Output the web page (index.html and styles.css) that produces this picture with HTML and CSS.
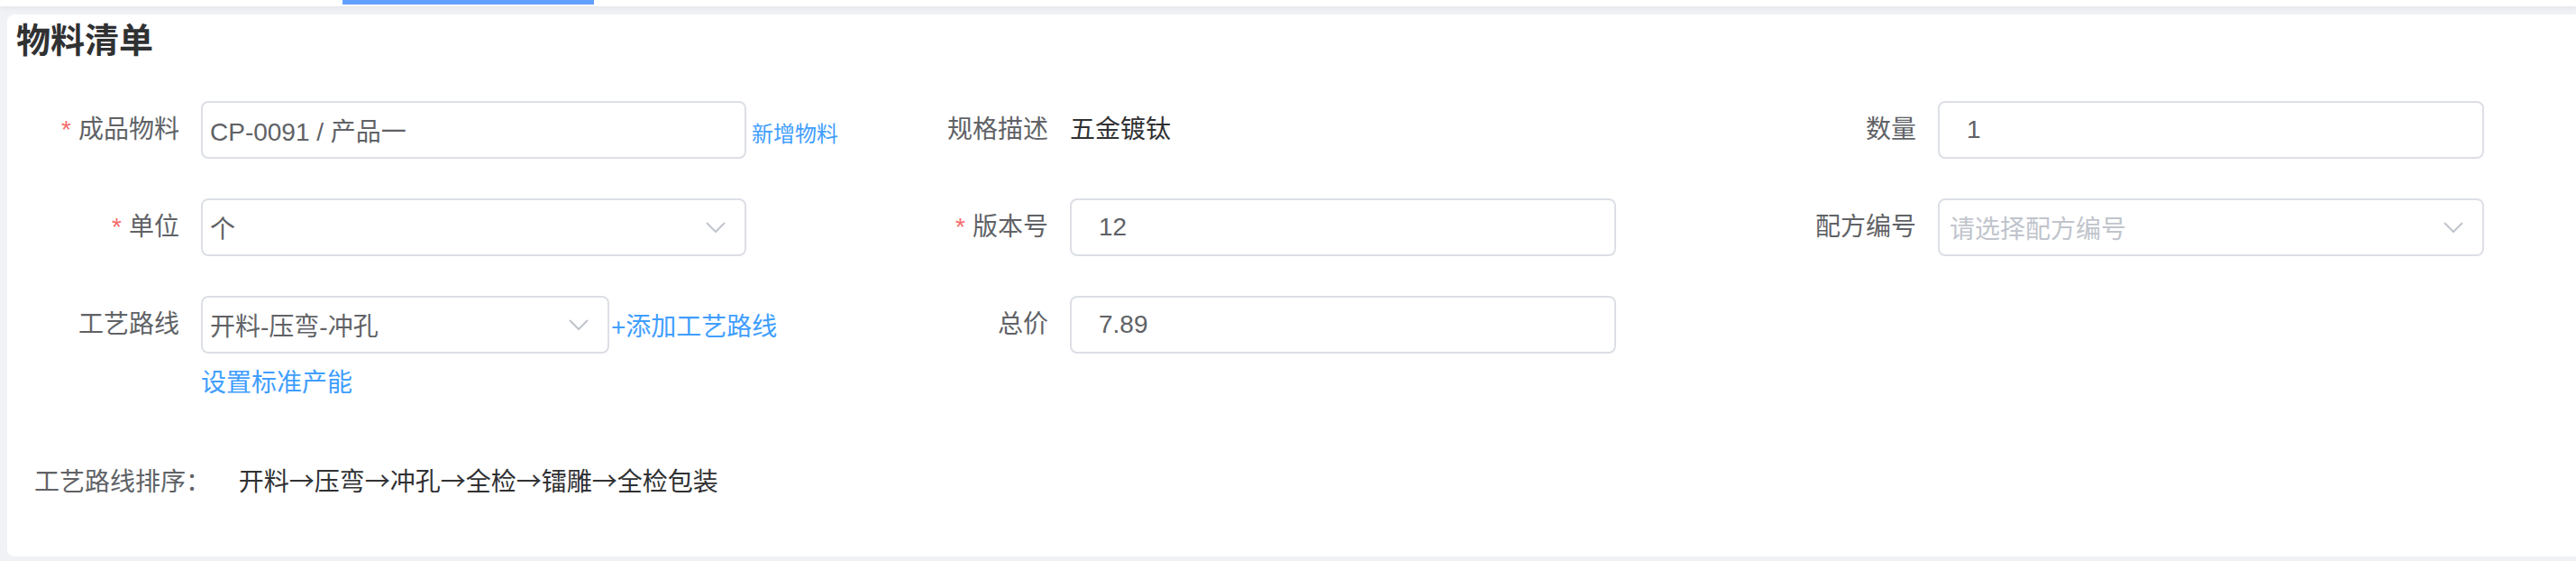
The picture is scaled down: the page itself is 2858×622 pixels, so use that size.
FILE: index.html
```html
<!DOCTYPE html>
<html>
  <head>
    <meta charset="UTF-8" />
    <meta name="viewport" content="width=device-width, initial-scale=1.0" />
    <title>物料清单</title>
    <link rel="stylesheet" href="styles.css">
  </head>
  <body>
    <div class="topbar">
      <span class="tab-active"></span>
    </div>
    <div class="page">
      <div class="card">
        <h2 class="card-title">物料清单</h2>

        <div class="form-grid">
          <!-- row 1 -->
          <div class="form-item">
            <label class="form-label required">成品物料</label>
            <div class="form-control">
              <div class="control-line">
                <div class="input w-main">CP-0091 / 产品一</div>
                <a class="link link-sm">新增物料</a>
              </div>
            </div>
          </div>
          <div class="form-item">
            <label class="form-label">规格描述</label>
            <div class="form-control">
              <div class="value-text">五金镀钛</div>
            </div>
          </div>
          <div class="form-item">
            <label class="form-label">数量</label>
            <div class="form-control">
              <div class="input w-mid pad-lg">1</div>
            </div>
          </div>

          <!-- row 2 -->
          <div class="form-item">
            <label class="form-label required">单位</label>
            <div class="form-control">
              <div class="input select w-main">
                <span>个</span>
                <svg class="chevron" width="22" height="13" viewBox="0 0 22 13"><polyline points="1,1 11,11 21,1" fill="none" stroke="#c0c4cc" stroke-width="2"/></svg>
              </div>
            </div>
          </div>
          <div class="form-item">
            <label class="form-label required">版本号</label>
            <div class="form-control">
              <div class="input w-mid pad-lg">12</div>
            </div>
          </div>
          <div class="form-item">
            <label class="form-label">配方编号</label>
            <div class="form-control">
              <div class="input select w-mid pad-sm">
                <span class="placeholder">请选择配方编号</span>
                <svg class="chevron" width="22" height="13" viewBox="0 0 22 13"><polyline points="1,1 11,11 21,1" fill="none" stroke="#c0c4cc" stroke-width="2"/></svg>
              </div>
            </div>
          </div>

          <!-- row 3 -->
          <div class="form-item">
            <label class="form-label">工艺路线</label>
            <div class="form-control">
              <div class="control-line">
                <div class="input select w-short">
                  <span>开料-压弯-冲孔</span>
                  <svg class="chevron" width="22" height="13" viewBox="0 0 22 13"><polyline points="1,1 11,11 21,1" fill="none" stroke="#c0c4cc" stroke-width="2"/></svg>
                </div>
                <a class="link">+添加工艺路线</a>
              </div>
              <a class="link link-block">设置标准产能</a>
            </div>
          </div>
          <div class="form-item">
            <label class="form-label">总价</label>
            <div class="form-control">
              <div class="input w-mid pad-lg">7.89</div>
            </div>
          </div>
          <div class="form-item"></div>
        </div>

        <div class="route-order">
          <span class="route-label">工艺路线排序：</span>
          <span class="route-steps">开料→压弯→冲孔→全检→镭雕→全检包装</span>
        </div>
      </div>
    </div>
  </body>
</html>
```

FILE: styles.css
```css
html,
body {
  margin: 0;
  height: 100%;
}
body {
  background-color: #f0f2f5;
  font-family: "Liberation Sans", "Noto Sans CJK SC", sans-serif;
  color: #606266;
  overflow: hidden;
}
.topbar {
  height: 7px;
  background: #fff;
  box-shadow: 0 2px 6px rgba(0, 0, 0, 0.06);
  position: relative;
}
.tab-active {
  display: block;
  margin-left: 380px;
  width: 279px;
  height: 5px;
  background: #62a0ff;
}
.page {
  padding-top: 9px;
}
.card {
  margin-left: 8px;
  background: #fff;
  border-radius: 8px 0 0 8px;
  padding: 0 0 62px 10px;
}
.card-title {
  margin: 0;
  font-family: "Noto Sans CJK SC", sans-serif;
  font-size: 38px;
  line-height: 52px;
  font-weight: 700;
  color: #303133;
}
.form-grid {
  display: grid;
  grid-template-columns: 964px 963px 1fr;
  row-gap: 44px;
  margin: 44px 0 0 5px;
}
.form-item {
  display: flex;
  align-items: flex-start;
}
.form-label {
  width: 200px;
  flex-shrink: 0;
  box-sizing: border-box;
  padding-right: 24px;
  text-align: right;
  font-size: 28px;
  line-height: 64px;
  color: #606266;
}
.form-label.required::before {
  content: "*";
  color: #f56c6c;
  margin-right: 8px;
}
.form-control {
  display: flex;
  flex-direction: column;
}
.control-line {
  display: flex;
  align-items: center;
}
.input {
  box-sizing: border-box;
  height: 64px;
  border: 2px solid #dcdfe6;
  border-radius: 8px;
  padding: 0 8px;
  display: flex;
  align-items: center;
  justify-content: space-between;
  font-size: 28px;
  color: #606266;
  background: #fff;
}
.input.pad-lg {
  padding-left: 30px;
}
.input.pad-sm {
  padding-left: 11px;
}
.select {
  padding-right: 21px;
}
.w-main {
  width: 605px;
}
.w-short {
  width: 453px;
}
.w-mid {
  width: 606px;
}
.placeholder {
  color: #c0c4cc;
}
.chevron {
  display: block;
}
.value-text {
  font-size: 28px;
  line-height: 64px;
  color: #303133;
}
.link {
  color: #409eff;
  font-size: 28px;
  cursor: pointer;
  margin-left: 2px;
}
.link-sm {
  font-size: 24px;
  margin-left: 6px;
  padding-top: 4px;
}
.link-block {
  display: block;
  margin: 13px 0 0 0;
  line-height: 40px;
}
.route-order {
  margin-top: 67px;
  padding-left: 20px;
  font-size: 28px;
  line-height: 40px;
}
.route-label {
  color: #606266;
}
.route-steps {
  margin-left: 23px;
  font-family: "Noto Sans CJK SC", sans-serif;
  color: #303133;
}
```
